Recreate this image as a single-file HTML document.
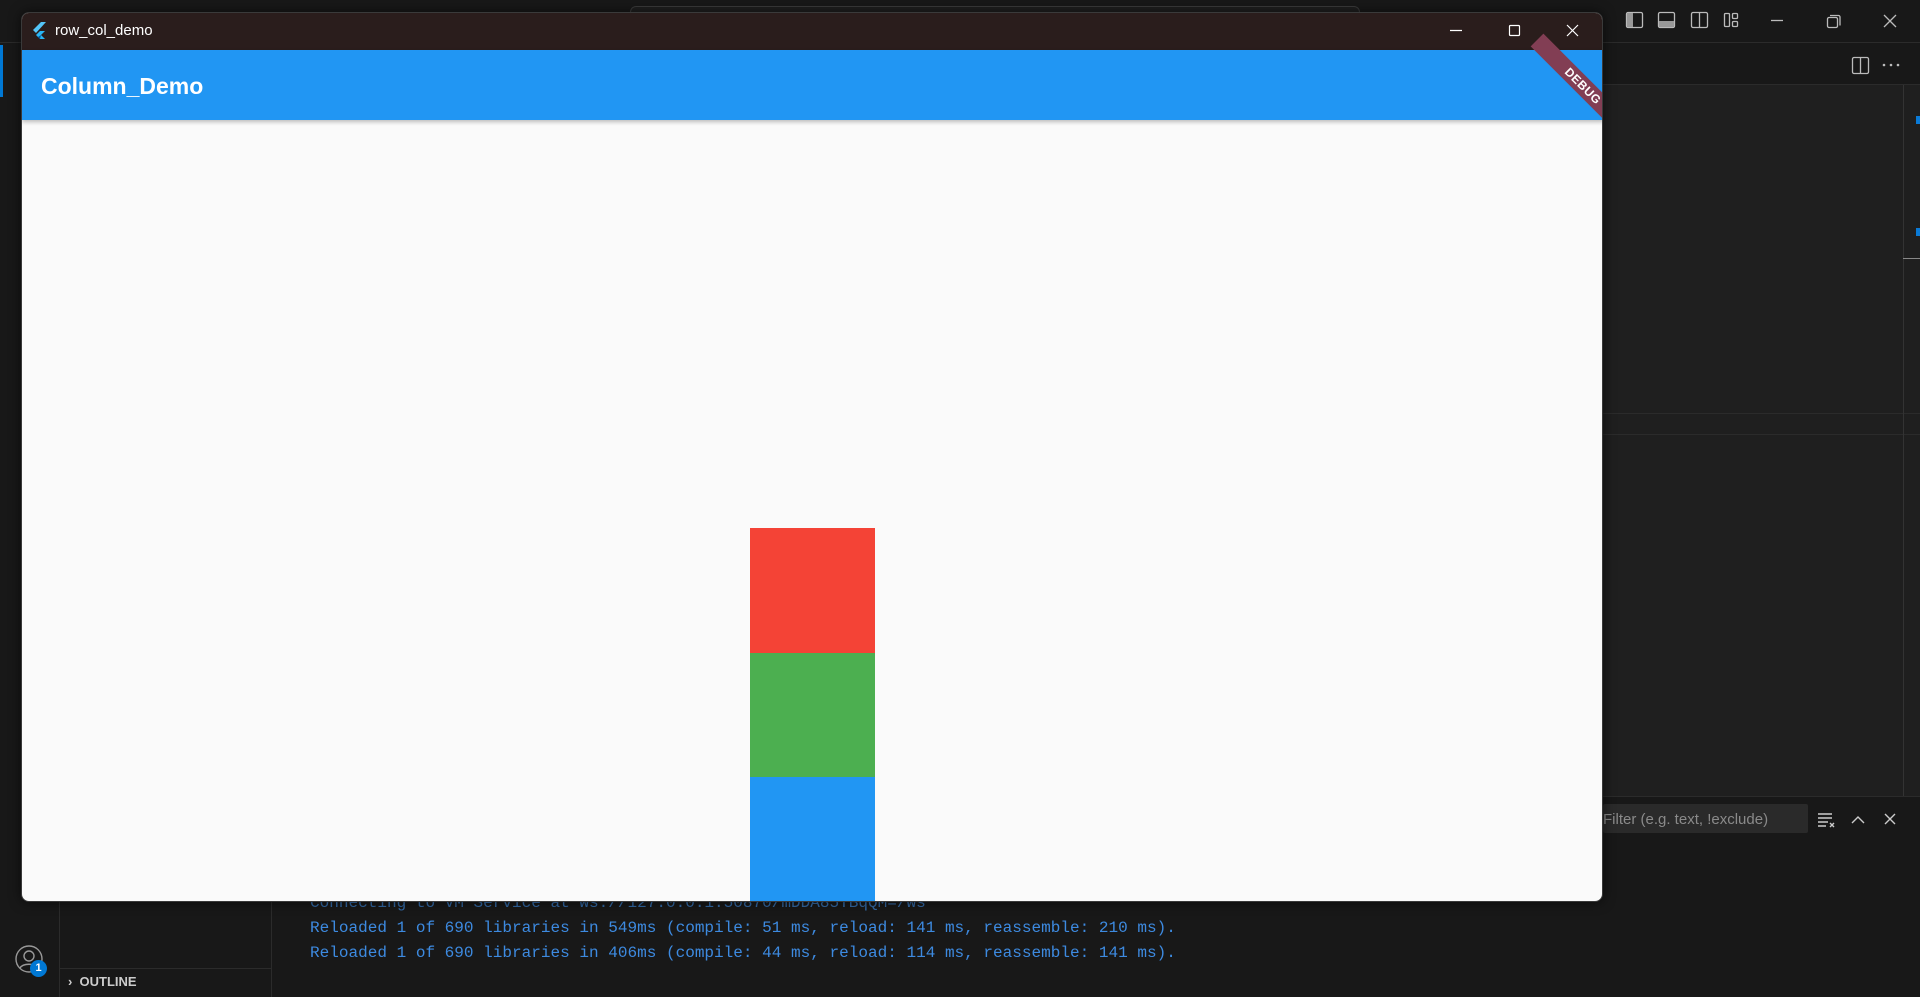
<!DOCTYPE html>
<html><head><meta charset="utf-8"><style>
*{margin:0;padding:0;box-sizing:border-box}
body{width:1920px;height:997px;overflow:hidden;background:#181818;position:relative;font-family:"Liberation Sans",sans-serif}
.a{position:absolute}
.mono{font-family:"Liberation Mono",monospace;font-size:16.05px;color:#3d8ae0;white-space:pre}
</style></head><body>
<div class="a" style="left:0;top:0;width:1920px;height:43px;background:#181818;border-bottom:1px solid #2b2b2b"></div>
<div class="a" style="left:630px;top:6px;width:730px;height:26px;border:1px solid #3a3a3a;border-radius:6px;background:#1f1f1f"></div>
<div class="a" style="left:0;top:43px;width:60px;height:954px;background:#181818;border-right:1px solid #2b2b2b"></div>
<div class="a" style="left:0;top:45px;width:3px;height:52px;background:#0078d4"></div>
<div class="a" style="left:60px;top:43px;width:212px;height:954px;background:#181818;border-right:1px solid #2b2b2b"></div>
<div class="a" style="left:272px;top:43px;width:1648px;height:42px;background:#181818;border-bottom:1px solid #2b2b2b"></div>
<div class="a" style="left:272px;top:85px;width:1648px;height:912px;background:#1f1f1f"></div>
<div class="a" style="left:1603px;top:413px;width:317px;height:1px;background:#2b2b2b"></div>
<div class="a" style="left:1603px;top:434px;width:317px;height:1px;background:#2b2b2b"></div>
<div class="a" style="left:1903px;top:85px;width:1px;height:711px;background:#333"></div>
<div class="a" style="left:1903px;top:258px;width:17px;height:1px;background:#888"></div>
<div class="a" style="left:1916px;top:116px;width:4px;height:8px;background:#0a7ad6"></div>
<div class="a" style="left:1916px;top:228px;width:4px;height:8px;background:#0a7ad6"></div>
<div class="a" style="left:272px;top:796px;width:1648px;height:1px;background:#2b2b2b"></div>
<div class="a" style="left:272px;top:797px;width:1648px;height:200px;background:#181818"></div>
<svg class="a" style="left:1620px;top:8px" width="300" height="80" fill="none" stroke="#bbb" stroke-width="1.3">
<rect x="6.5" y="4.5" width="16" height="15" rx="1.5"/><rect x="7" y="5" width="6" height="14" fill="#999" stroke="none"/>
<rect x="38.5" y="4.5" width="16" height="15" rx="1.5"/><rect x="39" y="13" width="15" height="6" fill="#999" stroke="none"/>
<rect x="71.5" y="4.5" width="16" height="15" rx="1.5"/><line x1="79.5" y1="5" x2="79.5" y2="19"/>
<rect x="104.5" y="5.5" width="5" height="13" rx="1"/><rect x="112.5" y="5.5" width="5" height="5" rx="1"/><rect x="112.5" y="13.5" width="5" height="5" rx="1"/>
<line x1="151" y1="12.5" x2="163" y2="12.5"/>
<rect x="207.5" y="9.5" width="10" height="10" rx="1.5"/><path d="M210 7.5h8.5a1.5 1.5 0 0 1 1.5 1.5v8.5"/>
<path d="M264 7l12 12M276 7l-12 12"/>
<rect x="232.5" y="49.5" width="16" height="16" rx="1.5"/><line x1="240.5" y1="50" x2="240.5" y2="65"/>
<g fill="#bbb" stroke="none"><circle cx="264" cy="57" r="1.3"/><circle cx="271" cy="57" r="1.3"/><circle cx="278" cy="57" r="1.3"/></g>
</svg>
<div class="a" style="left:1603px;top:804px;width:205px;height:29px;background:#2a2a2a;border-radius:2px"></div>
<div class="a" style="left:1603px;top:811px;font-size:15px;color:#8a8a8a">Filter (e.g. text, !exclude)</div>
<svg class="a" style="left:1812px;top:806px" width="100" height="28" fill="none" stroke="#ccc" stroke-width="1.4">
<path d="M6 8h14M6 12h14M6 16h10M6 20h8M18 17l4 4M22 17l-4 4"/>
<path d="M40 17l6-6 6 6"/>
<path d="M73 8l10 10M83 8l-10 10"/>
</svg>
<div class="a mono" style="left:310px;top:894px;opacity:.7">Connecting to VM Service at ws://127.0.0.1:50870/mDDA85TBqQM=/ws</div>
<div class="a mono" style="left:310px;top:919px">Reloaded 1 of 690 libraries in 549ms (compile: 51 ms, reload: 141 ms, reassemble: 210 ms).</div>
<div class="a mono" style="left:310px;top:944px">Reloaded 1 of 690 libraries in 406ms (compile: 44 ms, reload: 114 ms, reassemble: 141 ms).</div>
<svg class="a" style="left:12px;top:942px" width="40" height="40" fill="none" stroke="#999" stroke-width="1.4">
<circle cx="17" cy="17" r="13"/><circle cx="17" cy="14" r="5"/><path d="M8 26c3-5 15-5 18 0"/>
</svg>
<div class="a" style="left:30px;top:960px;width:17px;height:17px;border-radius:50%;background:#0078d4;color:#fff;font-size:11px;font-weight:bold;text-align:center;line-height:17px">1</div>
<div class="a" style="left:60px;top:968px;width:212px;height:1px;background:#2b2b2b"></div>
<div class="a" style="left:68px;top:974px;font-size:13px;font-weight:bold;color:#ccc">›&nbsp;&nbsp;OUTLINE</div>
<div class="a" style="left:21px;top:12px;width:1582px;height:890px;border-radius:8px;overflow:hidden;background:#fafafa;box-shadow:0 0 12px rgba(0,0,0,.6);border:1px solid #3a3a3a">
 <div class="a" style="left:0;top:0;width:1582px;height:37px;background:#2a1d1c"></div>
 <svg class="a" style="left:10px;top:8px" width="16" height="20"><path d="M9 1L1 9l3 3L14 1z" fill="#54c5f8"/><path d="M8 10l-4 4 4 4h5l-4-4 4-4z" fill="#29b6f6"/><path d="M8 18l-2-2 3-2z" fill="#01579b"/></svg>
 <div class="a" style="left:33px;top:9px;font-size:15px;color:#fff">row_col_demo</div>
 <svg class="a" style="left:1399px;top:0" width="162" height="37" fill="none" stroke="#fff" stroke-width="1.2">
  <line x1="29" y1="17.5" x2="41" y2="17.5"/><rect x="88.5" y="12.5" width="10" height="10" rx="1"/><path d="M146 12l11 11M157 12l-11 11"/>
 </svg>
 <div class="a" style="left:0;top:37px;width:1582px;height:70px;background:#2196f3;box-shadow:0 2px 4px rgba(0,0,0,.25)"></div>
 <div class="a" style="left:19px;top:60px;font-size:23px;font-weight:bold;color:#fff">Column_Demo</div>
 <div class="a" style="left:1496px;top:64px;width:130px;height:18px;background:#823e54;transform:rotate(45deg);color:#fff;font-size:12px;font-weight:bold;text-align:center;line-height:18px;letter-spacing:.5px">DEBUG</div>
 <div class="a" style="left:728px;top:515px;width:125px;height:125px;background:#f44336"></div>
 <div class="a" style="left:728px;top:640px;width:125px;height:124px;background:#4caf50"></div>
 <div class="a" style="left:728px;top:764px;width:125px;height:126px;background:#2196f3"></div>
</div>
</body></html>
